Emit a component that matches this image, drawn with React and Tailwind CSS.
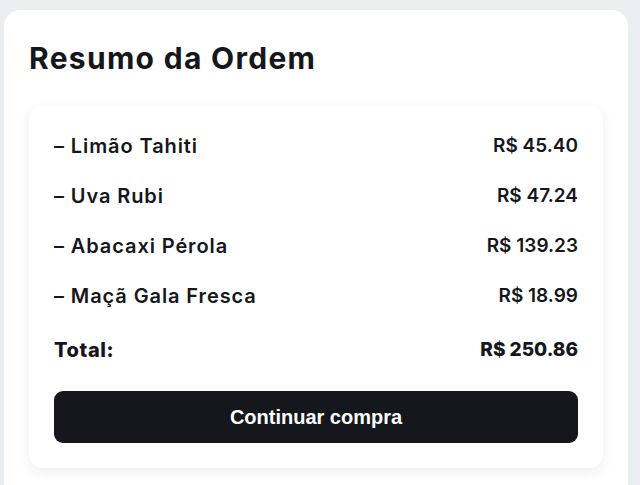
import React from "react";

const items = [
  { name: "Limão Tahiti", price: "R$ 45.40" },
  { name: "Uva Rubi", price: "R$ 47.24" },
  { name: "Abacaxi Pérola", price: "R$ 139.23" },
  { name: "Maçã Gala Fresca", price: "R$ 18.99" },
];

export default function App() {
  return (
    <div className="bg-[#e9eef0] pt-[10px] pl-[4px] pr-[12px] overflow-hidden h-[485px]" style={{ fontFamily: "Inter, 'Noto Sans', sans-serif" }}>
      <div className="bg-white rounded-t-[16px] px-[25px] pt-[30px] pb-[20px] h-[500px]">
        <h1 className="text-[30px] leading-[36px] font-bold text-[#15171c] tracking-[1.3px]">Resumo da Ordem</h1>
        <div className="mt-[30px] bg-white rounded-[14px] shadow-[0_4px_14px_rgba(0,0,0,0.07)] px-[25px] pt-[26px] pb-[25px]">
          <div className="flex flex-col gap-[22px]">
            {items.map((it) => (
              <div key={it.name} className="flex justify-between items-center leading-[28px] font-semibold text-[#15171c]">
                <span className="text-[20px] tracking-[0.9px]">– {it.name}</span>
                <span className="text-[19px]">{it.price}</span>
              </div>
            ))}
          </div>
          <div className="mt-[26px] flex justify-between items-center leading-[28px] font-extrabold text-[#15171c]">
            <span className="text-[20px] tracking-[0.6px]">Total:</span>
            <span className="text-[19px]">R$ 250.86</span>
          </div>
          <button className="mt-[27px] w-full h-[52px] rounded-[9px] bg-[#14171c] text-white text-[20px] font-bold" style={{ fontFamily: "'Liberation Sans', Arial, sans-serif" }}>
            Continuar compra
          </button>
        </div>
      </div>
    </div>
  );
}
